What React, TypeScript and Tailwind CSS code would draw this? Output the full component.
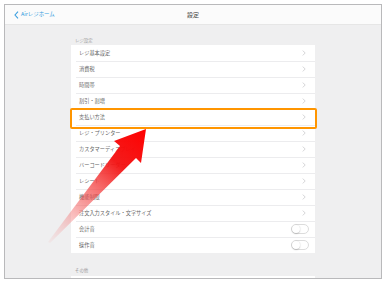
import React from 'react';

type Row = { label: string; toggle?: boolean; active?: boolean };

const ROWS: Row[] = [
  { label: 'レジ基本設定' },
  { label: '消費税' },
  { label: '時間帯' },
  { label: '割引・割増' },
  { label: '支払い方法', active: true },
  { label: 'レジ・プリンター' },
  { label: 'カスタマーディスプレイ' },
  { label: 'バーコードリーダー' },
  { label: 'レシート' },
  { label: '機能制限' },
  { label: '注文入力スタイル・文字サイズ' },
  { label: '会計音', toggle: true },
  { label: '操作音', toggle: true },
];

const FONT = { fontFamily: '"Noto Sans CJK JP", "Noto Sans", sans-serif' };

function Chevron() {
  return (
    <svg width="4" height="6" viewBox="0 0 4 6" className="shrink-0">
      <path d="M0.8 0.6 L3.2 3 L0.8 5.4" fill="none" stroke="#c9c9cc" strokeWidth="0.8" />
    </svg>
  );
}

function Toggle() {
  return (
    <div className="w-[18px] h-[10px] rounded-full border border-[#dcdcdc] bg-white relative shrink-0">
      <div className="absolute left-0 top-0 w-[8px] h-[8px] rounded-full bg-white shadow-[0_0.5px_1.5px_rgba(0,0,0,0.3)]" />
    </div>
  );
}

export default function App() {
  return (
    <div className="w-[386px] h-[281px] bg-white relative overflow-hidden" style={FONT}>
      <div className="mt-[4px] ml-[4px] w-[378px] h-[275px] border border-[#b9b9bb] bg-[#efeff0] flex flex-col overflow-hidden">
        <div className="h-[20px] bg-[#fbfbfb] border-b border-[#e6e6e6] relative flex items-center justify-center shrink-0">
          <div className="absolute left-[9px] top-0 h-full flex items-center gap-[2px] text-[#3a9fe0]">
            <svg width="5" height="8" viewBox="0 0 5 8">
              <path d="M4 0.7 L1 4 L4 7.3" fill="none" stroke="#3a9fe0" strokeWidth="1.1" />
            </svg>
            <span className="text-[5.4px] leading-none">Airレジホーム</span>
          </div>
          <span className="text-[6px] leading-none text-[#444]">設定</span>
        </div>

        <div className="w-[244px] mx-auto flex flex-col">
          <div className="h-[20px] flex items-end pl-[4px] pb-[3px] text-[4.4px] leading-none text-[#999]">レジ設定</div>
          <div className="bg-white flex flex-col">
            {ROWS.map((r, i) => (
              <div key={r.label} className="h-[16px] relative flex items-center pl-[8px] pr-[9px]">
                {i > 0 && <div className="absolute left-[5px] right-0 top-0 h-px bg-[#ececee]" />}
                <span className="flex-1 text-[5.2px] leading-none text-[#666]">{r.label}</span>
                {r.toggle ? <div className="-mr-[3px]"><Toggle /></div> : <Chevron />}
                {r.active && (
                  <div className="absolute -left-[1px] -right-[2px] -top-[1px] -bottom-[4px] border-2 border-[#ff9500] rounded-[2px]" />
                )}
              </div>
            ))}
          </div>
          <div className="h-[23px] flex items-end pl-[4px] pb-[4px] text-[4.4px] leading-none text-[#999]">その他</div>
          <div className="bg-white h-[16px]" />
        </div>
      </div>

      <svg className="absolute left-0 top-0 pointer-events-none" width="386" height="281" viewBox="0 0 386 281">
        <defs>
          <linearGradient id="arrowGrad" gradientUnits="userSpaceOnUse" x1="49" y1="243" x2="146" y2="129">
            <stop offset="0" stopColor="#f4a0a0" stopOpacity="0.1" />
            <stop offset="0.35" stopColor="#f25a5a" stopOpacity="0.6" />
            <stop offset="0.7" stopColor="#f31010" stopOpacity="0.95" />
            <stop offset="1" stopColor="#ff0000" />
          </linearGradient>
        </defs>
        <polygon points="146,129 141,163 136,158 50,243 48,242 120,146 114,141" fill="url(#arrowGrad)" />
      </svg>
    </div>
  );
}
